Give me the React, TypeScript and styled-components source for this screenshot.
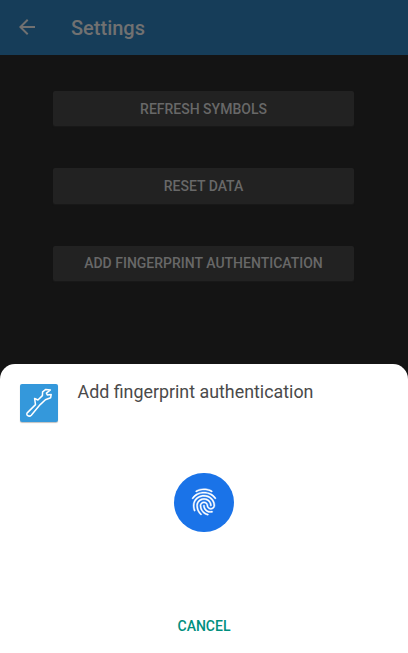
import React from "react";
import styled, { createGlobalStyle } from "styled-components";
import { MdArrowBack, MdFingerprint } from "react-icons/md";

const GlobalStyle = createGlobalStyle`
  *, *::before, *::after { box-sizing: border-box; }
  body { margin: 0; background: #141414; font-family: Roboto, sans-serif; }
`;

const Screen = styled.div`
  height: 653px;
  width: 408px;
  display: flex;
  flex-direction: column;
  overflow: hidden;
  background: #141414;
`;

const TopBar = styled.header`
  height: 55px;
  flex: none;
  display: flex;
  align-items: center;
  padding: 0 15px;
  background: #163d59;
  color: #717171;
`;

const BackButton = styled.button`
  display: flex;
  padding: 0 0 1px;
  border: 0;
  background: none;
  color: inherit;
  margin-right: 32px;
`;

const Title = styled.h1`
  margin: 0;
  font-size: 20px;
  line-height: 24px;
  font-weight: 500;
`;

const Actions = styled.main`
  flex: 1;
  display: flex;
  flex-direction: column;
  gap: 42px;
  padding: 36px 54px 0 53px;
`;

const ActionButton = styled.button`
  height: 35.4px;
  flex: none;
  padding: 0;
  border: 0;
  border-radius: 2px;
  background: #222222;
  box-shadow: 0 1px 1px #191919;
  color: #686868;
  font: 500 14px/18px Roboto, sans-serif;
`;

const Sheet = styled.section`
  height: 289px;
  flex: none;
  display: flex;
  flex-direction: column;
  align-items: center;
  border-radius: 15px 15px 0 0;
  background: #ffffff;
`;

const SheetHeader = styled.div`
  align-self: stretch;
  display: flex;
  padding: 20px 19.5px 0;
  gap: 20px;
  height: 108.5px;
`;

const AppIcon = styled.svg`
  width: 38px;
  height: 38px;
  flex: none;
  border-radius: 2px;
  background: #3498db;
  box-shadow: 0 1px 1px rgba(0, 0, 0, 0.25);
`;

const SheetTitle = styled.h2`
  margin: -3px 0 0;
  font-size: 17.85px;
  line-height: 22px;
  font-weight: 400;
  color: #4a4a4a;
`;

const Sensor = styled.div`
  width: 59.5px;
  height: 59.5px;
  flex: none;
  display: flex;
  align-items: center;
  justify-content: center;
  border-radius: 50%;
  background: #1a73e8;
  color: #ffffff;
`;

const FingerprintIcon = styled(MdFingerprint)`
  width: 32px;
  height: 32px;
  path {
    stroke: none;
  }
  path[d^="M17.81"] {
    stroke: #ffffff;
    stroke-width: 0.3px;
  }
`;

const CancelButton = styled.button`
  margin-top: 84.5px;
  padding: 0;
  border: 0;
  background: none;
  color: #008f7e;
  font: 500 14px/18px Roboto, sans-serif;
`;

const actions = ["REFRESH SYMBOLS", "RESET DATA", "ADD FINGERPRINT AUTHENTICATION"];

export default function App() {
  return (
    <>
      <GlobalStyle />
      <Screen>
        <TopBar>
          <BackButton aria-label="Back">
            <MdArrowBack size={24} />
          </BackButton>
          <Title>Settings</Title>
        </TopBar>
        <Actions>
          {actions.map((label) => (
            <ActionButton key={label}>{label}</ActionButton>
          ))}
        </Actions>
        <Sheet role="dialog">
          <SheetHeader>
            <AppIcon viewBox="0 0 38 38" fill="none">
              <path
                d="M7.5 28.6 L15.5 20.6 L14.6 14.4 L17.9 16 L22.4 11.6 L22.6 7.8 L25.8 5.4 L30.4 6 L26.4 9.2 L27.3 11 L31.2 10.6 L30.6 13.8 L25.4 15.8 L20.2 20.6 L11.3 31.2 C9 33.4 5.3 30.9 7.5 28.6 Z"
                stroke="#ffffff"
                strokeWidth="1.5"
                strokeLinejoin="round"
              />
            </AppIcon>
            <SheetTitle>Add fingerprint authentication</SheetTitle>
          </SheetHeader>
          <Sensor>
            <FingerprintIcon />
          </Sensor>
          <CancelButton>CANCEL</CancelButton>
        </Sheet>
      </Screen>
    </>
  );
}
